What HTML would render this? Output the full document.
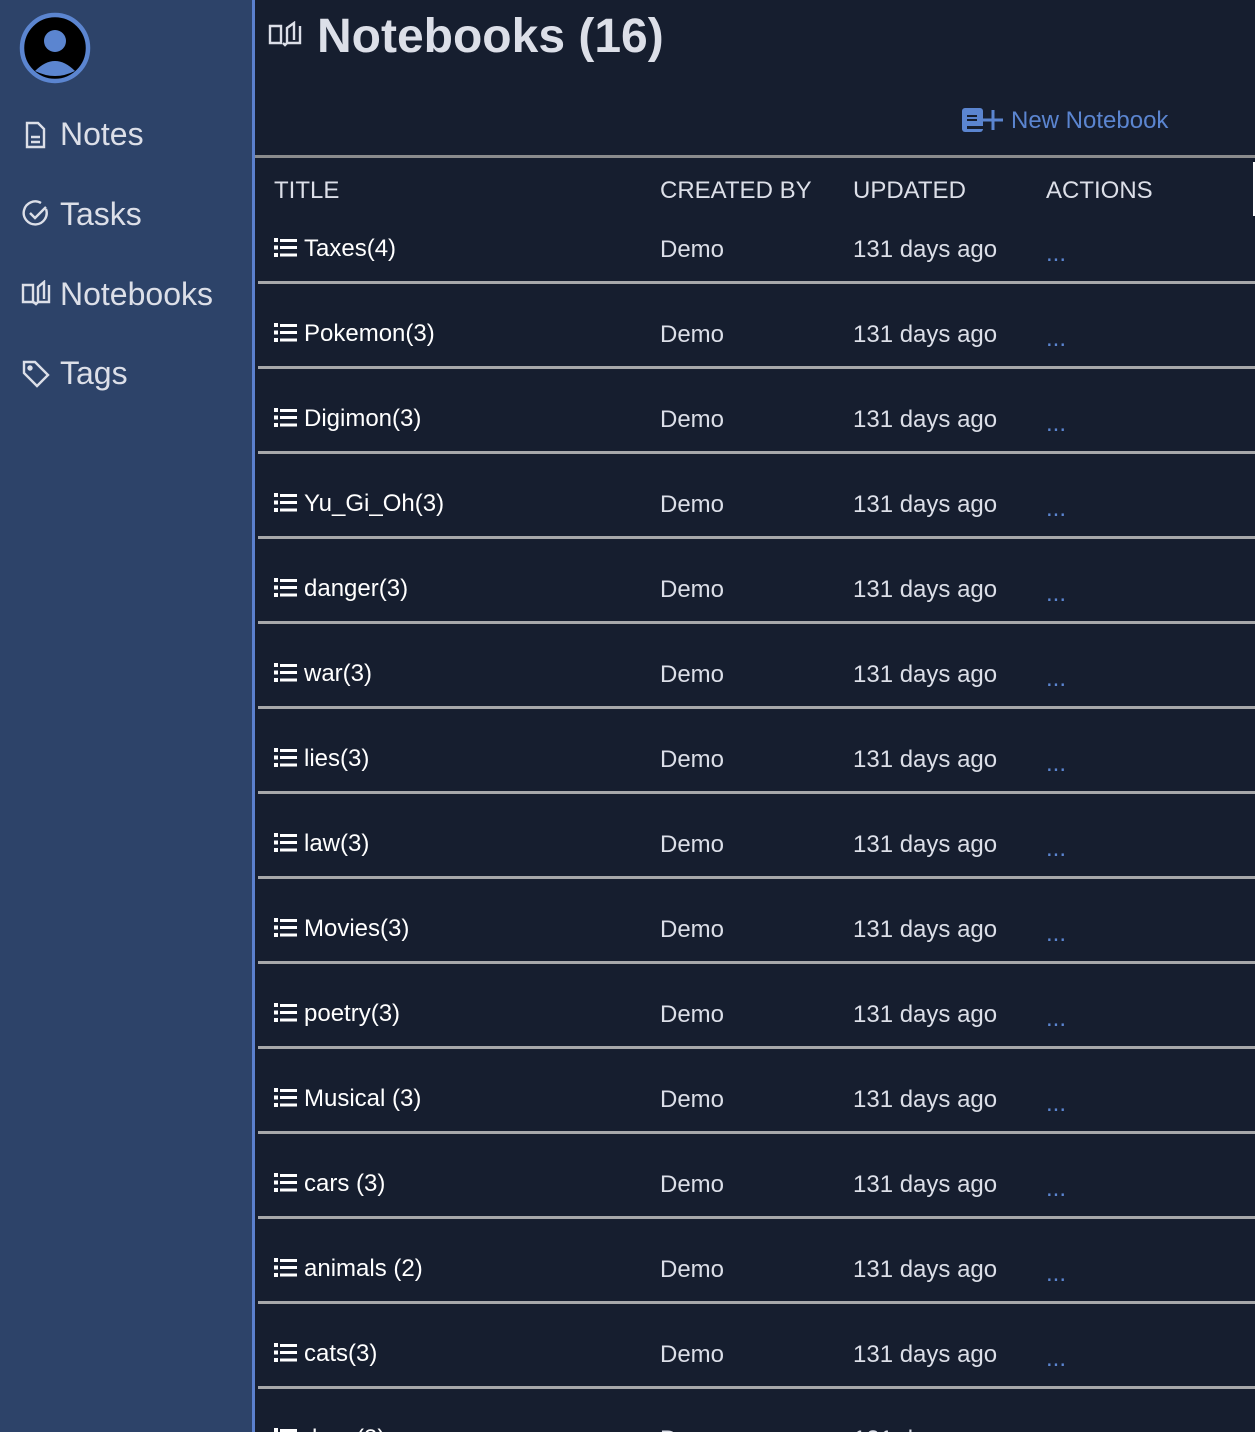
<!DOCTYPE html>
<html style="width:1255px;height:1432px;overflow:hidden"><head><meta charset="utf-8"><style>
*{margin:0;padding:0;box-sizing:border-box}
body{width:1255px;height:1432px;overflow:hidden;background:#161e2f;font-family:"Liberation Sans",sans-serif;position:relative}
#side{position:absolute;left:0;top:0;width:252px;height:1432px;background:#2d4369}
#bar{position:absolute;left:252px;top:0;width:3px;height:1432px;background:#5b80cd}
.nav{position:absolute;left:60px;font-size:32px;color:#dcdfe8;line-height:36px;white-space:nowrap}
.ic{position:absolute}
.t{position:absolute;white-space:nowrap;line-height:28px}
.hl{position:absolute;left:258px;right:0;height:3px;background:#a7a8aa}
</style></head><body>
<div id="side"></div><div id="bar"></div>
<svg class="ic" style="left:18px;top:11px" width="74" height="74" viewBox="0 0 74 74">
<circle cx="37" cy="37" r="33" fill="#000" stroke="#5b85d0" stroke-width="4.5"/>
<circle cx="37" cy="30" r="11" fill="#5b85d0"/>
<path d="M17 60 Q37 40 57 60 Q37 70 17 60Z" fill="#5b85d0"/>
</svg>
<svg class="ic" style="left:24px;top:121px" width="24" height="28" viewBox="0 0 24 28" fill="none" stroke="#dcdfe8" stroke-width="2.4">
<path d="M3 2h11l6 6v18H3z"/><path d="M7 16h9M7 21h9"/></svg>
<div class="nav" style="top:116px">Notes</div>
<svg class="ic" style="left:22px;top:199px" width="28" height="28" viewBox="0 0 28 28" fill="none" stroke="#dcdfe8" stroke-width="2.4">
<path d="M24 10A11.5 11.5 0 1 1 19 4"/><path d="M8 14l5 5 11-11"/></svg>
<div class="nav" style="top:196px">Tasks</div>
<svg class="ic" style="left:21px;top:280px" width="30" height="26" viewBox="0 0 30 26" fill="none" stroke="#dcdfe8" stroke-width="2.4">
<path d="M2 5h10v17H2zM28 5v17H17l-2 2-2-2M17 22V7l6-5v17"/><path d="M12 22l3 2"/></svg>
<div class="nav" style="top:276px">Notebooks</div>
<svg class="ic" style="left:22px;top:360px" width="28" height="28" viewBox="0 0 28 28" fill="none" stroke="#dcdfe8" stroke-width="2.4">
<path d="M2 2h11l13 13-11 11L2 13z"/><circle cx="8" cy="8" r="1.5" fill="#dcdfe8"/></svg>
<div class="nav" style="top:355px">Tags</div>

<svg class="ic" style="left:268px;top:21px" width="34" height="26" viewBox="0 0 34 26" fill="none" stroke="#dcdfe8" stroke-width="2.4">
<path d="M2 5h11v17H2zM32 5v17H19l-2 2-2-2M19 22V7l7-5v17"/></svg>
<div class="t" style="left:317px;top:9px;font-size:48px;font-weight:bold;color:#dcdfe8;line-height:56px">Notebooks (16)</div>

<svg class="ic" style="left:961px;top:107px" width="44" height="26" viewBox="0 0 44 26">
<rect x="1" y="1" width="21" height="24" rx="3" fill="#5b85d0"/>
<rect x="6" y="8" width="10" height="2" fill="#161e2f"/><rect x="6" y="12" width="10" height="2" fill="#161e2f"/>
<rect x="6" y="19" width="16" height="3" fill="#161e2f"/>
<path d="M22 13h20M32 3v20" stroke="#5b85d0" stroke-width="3"/></svg>
<div class="t" style="left:1011px;top:107px;font-size:24px;color:#5b85d0">New Notebook</div>

<div style="position:absolute;left:255px;right:0;top:155px;height:3px;background:#8a8b8d"></div>
<div style="position:absolute;left:1253px;top:162px;width:2px;height:54px;background:#fff"></div>
<div class="t" style="left:274px;top:177px;font-size:24px;color:#dcdfe8">TITLE</div>
<div class="t" style="left:660px;top:177px;font-size:24px;color:#dcdfe8">CREATED BY</div>
<div class="t" style="left:853px;top:177px;font-size:24px;color:#dcdfe8">UPDATED</div>
<div class="t" style="left:1046px;top:177px;font-size:24px;color:#dcdfe8">ACTIONS</div>
<div id="rows"></div>
<script>
var n=["Taxes(4)","Pokemon(3)","Digimon(3)","Yu_Gi_Oh(3)","danger(3)","war(3)","lies(3)","law(3)","Movies(3)","poetry(3)","Musical (3)","cars (3)","animals (2)","cats(3)","dogs(3)"];
var h="";
for(var i=0;i<n.length;i++){var y=85*i;
h+='<svg class="ic" style="left:274px;top:'+(238+y)+'px" width="24" height="19" viewBox="0 0 24 19" fill="#fff"><rect x="0" y="0" width="4" height="4"/><rect x="6" y="1" width="17" height="3"/><rect x="0" y="7.5" width="4" height="4"/><rect x="6" y="8" width="17" height="3"/><rect x="0" y="15" width="4" height="4"/><rect x="6" y="15.5" width="17" height="3"/></svg>';
h+='<div class="t" style="left:304px;top:'+(235+y)+'px;font-size:24px;color:#fff">'+n[i]+'</div>';
h+='<div class="t" style="left:660px;top:'+(236+y)+'px;font-size:24px;color:#dcdfe8">Demo</div>';
h+='<div class="t" style="left:853px;top:'+(236+y)+'px;font-size:24px;color:#dcdfe8">131 days ago</div>';
h+='<div class="t" style="left:1046px;top:'+(240+y)+'px;font-size:24px;color:#5b85d0">...</div>';
if(i<14)h+='<div class="hl" style="top:'+(281+y)+'px"></div>';}
document.getElementById("rows").innerHTML=h;
</script>
</body></html>
